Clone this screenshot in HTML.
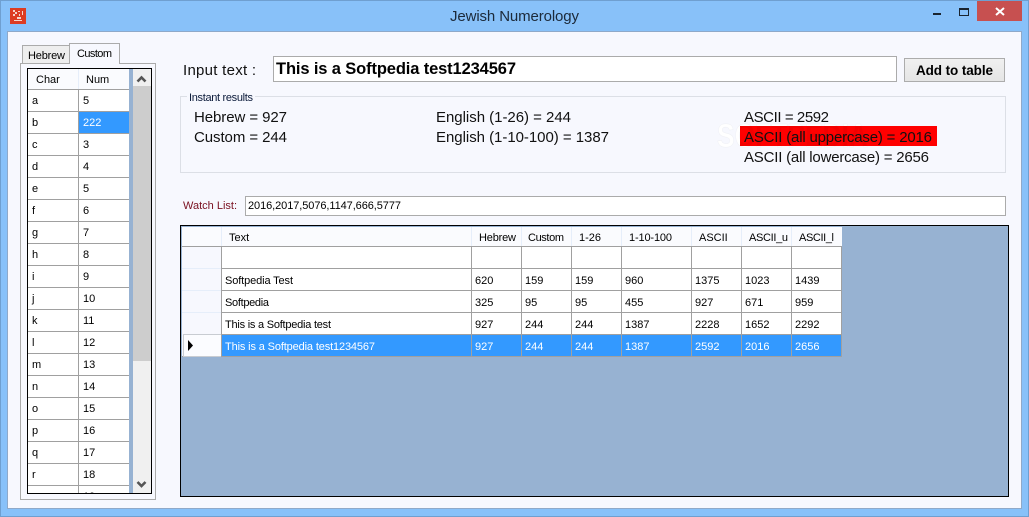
<!DOCTYPE html>
<html><head><meta charset="utf-8"><title>Jewish Numerology</title>
<style>
html,body{margin:0;padding:0;background:#88c1f9;width:1029px;height:517px;overflow:hidden}
svg{display:block;font-family:"Liberation Sans",sans-serif;fill:#000}
.c text{font-size:11px}
</style></head><body>
<svg width="1029" height="517" viewBox="0 0 1029 517" xmlns="http://www.w3.org/2000/svg" shape-rendering="crispEdges">
<defs>
<clipPath id="lc"><rect x="28" y="69" width="101" height="424"/></clipPath>
<clipPath id="rc"><rect x="740" y="126" width="197" height="20"/></clipPath>
<linearGradient id="bt" x1="0" y1="0" x2="0" y2="1"><stop offset="0" stop-color="#f0f0f0"/><stop offset="1" stop-color="#e5e5e5"/></linearGradient>
</defs>
<!-- frame -->
<rect x="0" y="0" width="1029" height="517" fill="#6f9fd0"/>
<rect x="1" y="1" width="1027" height="515" fill="#88c1f9"/>
<rect x="7" y="31" width="1015" height="478" fill="#8fa9c9"/>
<rect x="8" y="32" width="1013" height="476" fill="#f7f8fe"/>
<!-- icon -->
<rect x="10" y="8" width="16" height="16" fill="#dd3c22"/>
<g fill="#f6d5cc"><rect x="13" y="10" width="2" height="2"/><rect x="15" y="12" width="2" height="2"/><rect x="13" y="14" width="2" height="2"/><rect x="18" y="11" width="2" height="1"/><rect x="22" y="11" width="1" height="4"/><rect x="17" y="17" width="4" height="2"/><rect x="19" y="14" width="1" height="2"/><rect x="14" y="20" width="8" height="1"/></g>
<!-- title -->
<text x="514.5" y="21" font-size="15" text-anchor="middle" fill="#1c2a3a" textLength="129" lengthAdjust="spacing" shape-rendering="auto">Jewish Numerology</text>
<!-- window buttons -->
<rect x="933" y="13" width="8" height="2" fill="#1a2430"/>
<rect x="959" y="8" width="10" height="8" fill="#1a2430"/><rect x="960" y="10" width="8" height="5" fill="#88c1f9"/>
<rect x="977" y="1" width="45" height="20" fill="#c75050"/>
<path d="M996 8 L1004 15 M1004 8 L996 15" stroke="#fff" stroke-width="2" fill="none" shape-rendering="auto"/>

<!-- tabs -->
<rect x="20" y="63" width="136" height="437" fill="#ababab"/>
<rect x="21" y="64" width="134" height="435" fill="#f7f8fe"/>
<rect x="22" y="45" width="48" height="19" fill="#ababab"/><rect x="23" y="46" width="47" height="17" fill="#eeeeee"/>
<rect x="69" y="43" width="51" height="21" fill="#ababab"/><rect x="70" y="44" width="49" height="21" fill="#f7f8fe"/>
<text x="28" y="59" font-size="11" textLength="37" lengthAdjust="spacing" shape-rendering="auto">Hebrew</text>
<text x="77" y="57" font-size="11" textLength="35" lengthAdjust="spacing" shape-rendering="auto">Custom</text>

<!-- left grid -->
<rect x="27" y="68" width="125" height="426" fill="#000"/>
<rect x="28" y="69" width="123" height="424" fill="#97b2d2"/>
<rect x="133" y="69" width="18" height="424" fill="#f0f0f0"/>
<rect x="133" y="86" width="18" height="275" fill="#cdcdcd"/>
<path d="M137.500 81.500 L141.500 77.500 L145.500 81.500" stroke="#555" stroke-width="2.600" fill="none" shape-rendering="auto"/>
<path d="M137.500 482 L141.500 486 L145.500 482" stroke="#555" stroke-width="2.600" fill="none" shape-rendering="auto"/>
<g clip-path="url(#lc)">
<rect x="28" y="69" width="101" height="424" fill="#a0a0a0"/>
<rect x="28" y="69" width="50" height="20" fill="#fafbfe"/><rect x="79" y="69" width="50" height="20" fill="#fafbfe"/><rect x="78" y="69" width="1" height="20" fill="#e6eefa"/>
<g fill="#fff">
<rect x="28" y="90" width="50" height="21"/><rect x="79" y="90" width="50" height="21"/>
<rect x="28" y="112" width="50" height="21"/><rect x="79" y="112" width="50" height="21" fill="#3399ff"/>
<rect x="28" y="134" width="50" height="21"/><rect x="79" y="134" width="50" height="21"/>
<rect x="28" y="156" width="50" height="21"/><rect x="79" y="156" width="50" height="21"/>
<rect x="28" y="178" width="50" height="21"/><rect x="79" y="178" width="50" height="21"/>
<rect x="28" y="200" width="50" height="21"/><rect x="79" y="200" width="50" height="21"/>
<rect x="28" y="222" width="50" height="21"/><rect x="79" y="222" width="50" height="21"/>
<rect x="28" y="244" width="50" height="21"/><rect x="79" y="244" width="50" height="21"/>
<rect x="28" y="266" width="50" height="21"/><rect x="79" y="266" width="50" height="21"/>
<rect x="28" y="288" width="50" height="21"/><rect x="79" y="288" width="50" height="21"/>
<rect x="28" y="310" width="50" height="21"/><rect x="79" y="310" width="50" height="21"/>
<rect x="28" y="332" width="50" height="21"/><rect x="79" y="332" width="50" height="21"/>
<rect x="28" y="354" width="50" height="21"/><rect x="79" y="354" width="50" height="21"/>
<rect x="28" y="376" width="50" height="21"/><rect x="79" y="376" width="50" height="21"/>
<rect x="28" y="398" width="50" height="21"/><rect x="79" y="398" width="50" height="21"/>
<rect x="28" y="420" width="50" height="21"/><rect x="79" y="420" width="50" height="21"/>
<rect x="28" y="442" width="50" height="21"/><rect x="79" y="442" width="50" height="21"/>
<rect x="28" y="464" width="50" height="21"/><rect x="79" y="464" width="50" height="21"/>
<rect x="28" y="486" width="50" height="7"/><rect x="79" y="486" width="50" height="7"/>
</g>
<g class="c" shape-rendering="auto">
<text x="36" y="83">Char</text><text x="86" y="83">Num</text>
<text x="32" y="104">a</text><text x="83" y="104">5</text>
<text x="32" y="126">b</text><text x="83" y="126" fill="#fff">222</text>
<text x="32" y="148">c</text><text x="83" y="148">3</text>
<text x="32" y="170">d</text><text x="83" y="170">4</text>
<text x="32" y="192">e</text><text x="83" y="192">5</text>
<text x="32" y="214">f</text><text x="83" y="214">6</text>
<text x="32" y="236">g</text><text x="83" y="236">7</text>
<text x="32" y="258">h</text><text x="83" y="258">8</text>
<text x="32" y="280">i</text><text x="83" y="280">9</text>
<text x="32" y="302">j</text><text x="83" y="302">10</text>
<text x="32" y="324">k</text><text x="83" y="324">11</text>
<text x="32" y="346">l</text><text x="83" y="346">12</text>
<text x="32" y="368">m</text><text x="83" y="368">13</text>
<text x="32" y="390">n</text><text x="83" y="390">14</text>
<text x="32" y="412">o</text><text x="83" y="412">15</text>
<text x="32" y="434">p</text><text x="83" y="434">16</text>
<text x="32" y="456">q</text><text x="83" y="456">17</text>
<text x="32" y="478">r</text><text x="83" y="478">18</text>
<text x="32" y="500">s</text><text x="83" y="500">19</text>
</g>
</g>

<!-- input row -->
<text x="183" y="75" font-size="15" fill="#111" textLength="73" lengthAdjust="spacing" shape-rendering="auto">Input text :</text>
<rect x="273" y="56" width="624" height="26" fill="#ababab"/><rect x="274" y="57" width="622" height="24" fill="#fff"/>
<text x="276" y="74" font-size="16.500" font-weight="bold" textLength="240" lengthAdjust="spacing" shape-rendering="auto">This is a Softpedia test1234567</text>
<rect x="904" y="58" width="101" height="24" fill="#acacac"/><rect x="905" y="59" width="99" height="22" fill="url(#bt)"/>
<text x="916" y="75" font-size="13.500" font-weight="bold" textLength="77" lengthAdjust="spacing" shape-rendering="auto">Add to table</text>

<!-- group box -->
<rect x="180" y="96" width="826" height="77" fill="#dcdfe6"/><rect x="181" y="97" width="824" height="75" fill="#f7f8fe"/>
<rect x="187" y="94" width="68" height="5" fill="#f7f8fe"/>
<text x="189" y="101" font-size="11" fill="#0b1a3a" textLength="64" lengthAdjust="spacing" shape-rendering="auto">Instant results</text>
<!-- watermark on light background -->
<text x="717" y="147" font-size="33" font-weight="bold" fill="#ffffff" stroke="#e4e6ec" stroke-width="0.500" stroke-opacity="0.5" textLength="151" lengthAdjust="spacingAndGlyphs" shape-rendering="auto">SOFTPEDIA</text>
<g font-size="15" fill="#111" shape-rendering="auto">
<text x="194" y="122" textLength="93" lengthAdjust="spacing">Hebrew = 927</text>
<text x="194" y="142" textLength="93" lengthAdjust="spacing">Custom = 244</text>
<text x="436" y="122" textLength="135" lengthAdjust="spacing">English (1-26) = 244</text>
<text x="436" y="142" textLength="173" lengthAdjust="spacing">English (1-10-100) = 1387</text>
<text x="744" y="122" textLength="85" lengthAdjust="spacing">ASCII = 2592</text>
</g>
<rect x="740" y="126" width="197" height="20" fill="#ff0000"/>
<g clip-path="url(#rc)"><text x="717" y="147" font-size="33" font-weight="bold" fill="#a00000" fill-opacity="0.12" textLength="151" lengthAdjust="spacingAndGlyphs" shape-rendering="auto">SOFTPEDIA</text></g>
<g font-size="15" fill="#111" shape-rendering="auto">
<text x="744" y="142" textLength="188" lengthAdjust="spacing">ASCII (all uppercase) = 2016</text>
<text x="744" y="162" textLength="185" lengthAdjust="spacing">ASCII (all lowercase) = 2656</text>
</g>

<!-- watch list -->
<text x="183" y="209" font-size="11" fill="#7a1020" textLength="54" lengthAdjust="spacing" shape-rendering="auto">Watch List:</text>
<rect x="245" y="196" width="761" height="20" fill="#ababab"/><rect x="246" y="197" width="759" height="18" fill="#fff"/>
<text x="248" y="209" font-size="11" textLength="153" lengthAdjust="spacing" shape-rendering="auto">2016,2017,5076,1147,666,5777</text>

<!-- main grid -->
<rect x="180" y="225" width="829" height="272" fill="#000"/>
<rect x="181" y="226" width="827" height="270" fill="#97b2d2"/>
<!-- header -->
<rect x="182" y="227" width="660" height="19" fill="#fafbfe"/>
<rect x="221" y="227" width="1" height="19" fill="#e6eefa"/><rect x="471" y="227" width="1" height="19" fill="#e6eefa"/><rect x="521" y="227" width="1" height="19" fill="#e6eefa"/><rect x="571" y="227" width="1" height="19" fill="#e6eefa"/><rect x="621" y="227" width="1" height="19" fill="#e6eefa"/><rect x="691" y="227" width="1" height="19" fill="#e6eefa"/><rect x="741" y="227" width="1" height="19" fill="#e6eefa"/><rect x="791" y="227" width="1" height="19" fill="#e6eefa"/>
<!-- body -->
<rect x="182" y="246" width="660" height="111" fill="#a0a0a0"/>
<rect x="182" y="247" width="39" height="109" fill="#f7f8fe"/>
<rect x="182" y="268" width="39" height="1" fill="#e6eefa"/><rect x="182" y="290" width="39" height="1" fill="#e6eefa"/><rect x="182" y="312" width="39" height="1" fill="#e6eefa"/>
<rect x="183" y="334" width="38" height="1" fill="#c8ccd2"/><rect x="183" y="335" width="1" height="21" fill="#c8ccd2"/><rect x="183" y="356" width="38" height="1" fill="#c8ccd2"/><rect x="184" y="335" width="37" height="21" fill="#fbfcff"/>
<path d="M188 340 L193 345.500 L188 351 Z" fill="#000" shape-rendering="auto"/>
<g fill="#fff">
<rect x="222" y="247" width="249" height="21"/><rect x="472" y="247" width="49" height="21"/><rect x="522" y="247" width="49" height="21"/><rect x="572" y="247" width="49" height="21"/><rect x="622" y="247" width="69" height="21"/><rect x="692" y="247" width="49" height="21"/><rect x="742" y="247" width="49" height="21"/><rect x="792" y="247" width="49" height="21"/>
<rect x="222" y="269" width="249" height="21"/><rect x="472" y="269" width="49" height="21"/><rect x="522" y="269" width="49" height="21"/><rect x="572" y="269" width="49" height="21"/><rect x="622" y="269" width="69" height="21"/><rect x="692" y="269" width="49" height="21"/><rect x="742" y="269" width="49" height="21"/><rect x="792" y="269" width="49" height="21"/>
<rect x="222" y="291" width="249" height="21"/><rect x="472" y="291" width="49" height="21"/><rect x="522" y="291" width="49" height="21"/><rect x="572" y="291" width="49" height="21"/><rect x="622" y="291" width="69" height="21"/><rect x="692" y="291" width="49" height="21"/><rect x="742" y="291" width="49" height="21"/><rect x="792" y="291" width="49" height="21"/>
<rect x="222" y="313" width="249" height="21"/><rect x="472" y="313" width="49" height="21"/><rect x="522" y="313" width="49" height="21"/><rect x="572" y="313" width="49" height="21"/><rect x="622" y="313" width="69" height="21"/><rect x="692" y="313" width="49" height="21"/><rect x="742" y="313" width="49" height="21"/><rect x="792" y="313" width="49" height="21"/>
</g>
<g fill="#3399ff">
<rect x="222" y="335" width="249" height="21"/><rect x="472" y="335" width="49" height="21"/><rect x="522" y="335" width="49" height="21"/><rect x="572" y="335" width="49" height="21"/><rect x="622" y="335" width="69" height="21"/><rect x="692" y="335" width="49" height="21"/><rect x="742" y="335" width="49" height="21"/><rect x="792" y="335" width="49" height="21"/>
</g>
<g class="c" shape-rendering="auto">
<text x="229" y="241">Text</text><text x="479" y="241" textLength="37" lengthAdjust="spacing">Hebrew</text><text x="528" y="241" textLength="36" lengthAdjust="spacing">Custom</text><text x="579" y="241">1-26</text><text x="629" y="241" textLength="43" lengthAdjust="spacing">1-10-100</text><text x="699" y="241">ASCII</text><text x="749" y="241" textLength="39" lengthAdjust="spacing">ASCII_u</text><text x="799" y="241" textLength="35" lengthAdjust="spacing">ASCII_l</text>

<text x="225" y="284" textLength="68" lengthAdjust="spacing">Softpedia Test</text><text x="475" y="284">620</text><text x="525" y="284">159</text><text x="575" y="284">159</text><text x="625" y="284">960</text><text x="695" y="284">1375</text><text x="745" y="284">1023</text><text x="795" y="284">1439</text>

<text x="225" y="306" textLength="44" lengthAdjust="spacing">Softpedia</text><text x="475" y="306">325</text><text x="525" y="306">95</text><text x="575" y="306">95</text><text x="625" y="306">455</text><text x="695" y="306">927</text><text x="745" y="306">671</text><text x="795" y="306">959</text>

<text x="225" y="328" textLength="106" lengthAdjust="spacing">This is a Softpedia test</text><text x="475" y="328">927</text><text x="525" y="328">244</text><text x="575" y="328">244</text><text x="625" y="328">1387</text><text x="695" y="328">2228</text><text x="745" y="328">1652</text><text x="795" y="328">2292</text>

<g fill="#fff"><text x="225" y="350" textLength="150" lengthAdjust="spacing">This is a Softpedia test1234567</text><text x="475" y="350">927</text><text x="525" y="350">244</text><text x="575" y="350">244</text><text x="625" y="350">1387</text><text x="695" y="350">2592</text><text x="745" y="350">2016</text><text x="795" y="350">2656</text></g>
</g>
</svg>
</body></html>
